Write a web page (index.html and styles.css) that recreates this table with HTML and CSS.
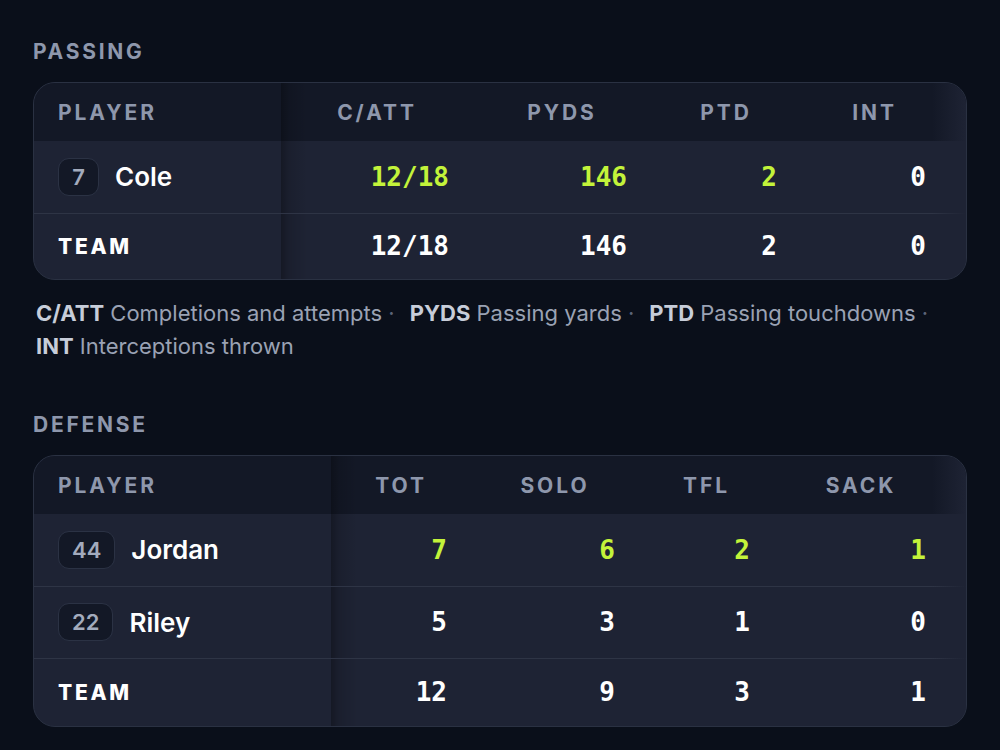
FILE: index.html
```html
<!DOCTYPE html>
<html lang="en">
<head>
<meta charset="utf-8">
<title>Box score</title>
<link rel="stylesheet" href="styles.css">
</head>
<body>
<main class="page">
  <section class="stat-section">
    <h2 class="section-title">Passing</h2>
    <div class="table-card">
      <table class="stat-table passing">
        <colgroup>
          <col class="w-player"><col class="w-catt"><col class="w-pyds"><col class="w-ptd"><col>
        </colgroup>
        <thead>
          <tr><th class="col-player">Player</th><th>C/ATT</th><th>PYDS</th><th>PTD</th><th>INT</th></tr>
        </thead>
        <tbody>
          <tr>
            <td class="col-player"><div class="player"><span class="jersey">7</span><span class="name">Cole</span></div></td>
            <td class="lead">12/18</td><td class="lead">146</td><td class="lead">2</td><td>0</td>
          </tr>
        </tbody>
        <tfoot>
          <tr class="team-row">
            <td class="col-player team-label">Team</td>
            <td>12/18</td><td>146</td><td>2</td><td>0</td>
          </tr>
        </tfoot>
      </table>
      <div class="edge-fade"></div>
    </div>
    <ul class="legend">
      <li><b>C/ATT</b> Completions and attempts <span class="sep">·</span></li>
      <li><b>PYDS</b> Passing yards <span class="sep">·</span></li>
      <li><b>PTD</b> Passing touchdowns <span class="sep">·</span></li>
      <li><b>INT</b> Interceptions thrown</li>
    </ul>
  </section>

  <section class="stat-section">
    <h2 class="section-title">Defense</h2>
    <div class="table-card">
      <table class="stat-table defense">
        <colgroup>
          <col class="w-dplayer"><col class="w-tot"><col class="w-solo"><col class="w-tfl"><col>
        </colgroup>
        <thead>
          <tr><th class="col-player">Player</th><th>TOT</th><th>SOLO</th><th>TFL</th><th>SACK</th></tr>
        </thead>
        <tbody>
          <tr>
            <td class="col-player"><div class="player"><span class="jersey">44</span><span class="name">Jordan</span></div></td>
            <td class="lead">7</td><td class="lead">6</td><td class="lead">2</td><td class="lead">1</td>
          </tr>
          <tr>
            <td class="col-player"><div class="player"><span class="jersey">22</span><span class="name">Riley</span></div></td>
            <td>5</td><td>3</td><td>1</td><td>0</td>
          </tr>
        </tbody>
        <tfoot>
          <tr class="team-row">
            <td class="col-player team-label">Team</td>
            <td>12</td><td>9</td><td>3</td><td>1</td>
          </tr>
        </tfoot>
      </table>
      <div class="edge-fade"></div>
    </div>
  </section>
</main>
</body>
</html>
```

FILE: styles.css
```css
* { box-sizing: border-box; }

html, body {
  margin: 0;
  padding: 0;
  background: #0a0f1a;
}

body {
  font-family: Inter, "Noto Sans", sans-serif;
  color: #ffffff;
}

.page {
  padding: 38px 33px 0 33px;
  display: flex;
  flex-direction: column;
  gap: 48px;
}

.section-title {
  margin: 0 0 16px 0;
  font-size: 21px;
  line-height: 28px;
  font-weight: 700;
  letter-spacing: 0.13em;
  text-transform: uppercase;
  color: #8e97ac;
}

.table-card {
  position: relative;
  border: 1px solid #2a3142;
  border-radius: 22px;
  overflow: hidden;
  background: #1e2334;
}

.stat-table {
  width: 100%;
  border-collapse: collapse;
  table-layout: fixed;
}

.w-player { width: 247px; }
.w-catt { width: 192px; }
.w-pyds { width: 178px; }
.w-ptd { width: 150px; }
.w-dplayer { width: 297px; }
.w-tot { width: 140px; }
.w-solo { width: 168px; }
.w-tfl { width: 135px; }

.stat-table th {
  height: 58px;
  padding: 0;
  background: #131826;
  font-size: 21px;
  font-weight: 700;
  letter-spacing: 0.14em;
  text-transform: uppercase;
  color: #8e97ac;
  text-align: center;
  vertical-align: middle;
}

.stat-table th:last-child { padding-right: 18px; }

.stat-table th.col-player {
  text-align: left;
  padding-left: 24px;
}

.stat-table td {
  height: 72px;
  padding: 0 24px 0 0;
  text-align: right;
  vertical-align: middle;
  font-family: "DejaVu Sans Mono", monospace;
  font-weight: 700;
  font-size: 26px;
  color: #ffffff;
  border-bottom: 1px solid #2e3445;
}

.stat-table td:last-child { padding-right: 40px; }

.stat-table td.col-player {
  text-align: left;
  padding-left: 24px;
  font-family: Inter, "Noto Sans", sans-serif;
}

.stat-table th:nth-child(2),
.stat-table td:nth-child(2) {
  background-image: linear-gradient(to right, rgba(0, 0, 0, 0.3), rgba(0, 0, 0, 0.12) 8px, rgba(0, 0, 0, 0) 26px);
}

.stat-table td.lead { color: #c3f33a; }

.team-row td {
  height: 66px;
  border-bottom: none;
}

.defense .team-row td { height: 68px; }

.team-row td.team-label {
  font-size: 21px;
  font-weight: 800;
  letter-spacing: 0.13em;
  text-transform: uppercase;
}

.player {
  display: flex;
  align-items: center;
  gap: 16px;
}

.jersey {
  min-width: 41px;
  height: 38px;
  padding: 0 13px;
  border: 1px solid #2b3244;
  border-radius: 11px;
  background: #131826;
  display: inline-flex;
  align-items: center;
  justify-content: center;
  font-size: 22px;
  font-weight: 600;
  color: #a3abbd;
}

.name {
  font-size: 26px;
  font-weight: 600;
  color: #ffffff;
}

.edge-fade {
  position: absolute;
  top: 0;
  right: 0;
  bottom: 0;
  width: 34px;
  background: linear-gradient(to left, #1e2334, rgba(30, 35, 52, 0));
  pointer-events: none;
}

.legend {
  list-style: none;
  margin: 17px 0 0 0;
  padding: 0 0 0 3px;
  display: flex;
  flex-wrap: wrap;
  column-gap: 15px;
  font-size: 22px;
  line-height: 33px;
  color: #9aa2b4;
}

.legend b {
  font-weight: 700;
  color: #c7cdd9;
}

.legend .sep {
  color: #5c6478;
}
```
